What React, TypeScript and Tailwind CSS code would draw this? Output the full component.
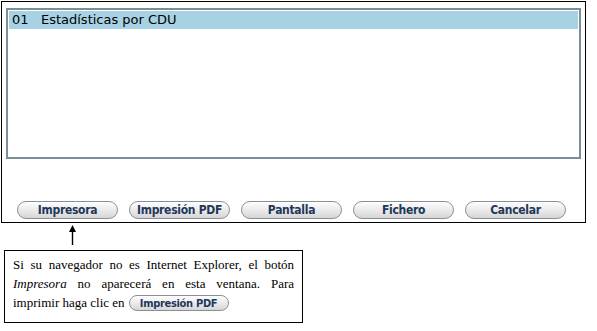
import React from "react";

const labels = ["Impresora", "Impresión PDF", "Pantalla", "Fichero", "Cancelar"];

function PillButton({ label, className = "" }: { label: string; className?: string }) {
  return (
    <button
      className={`inline-flex items-center justify-center rounded-full border border-[#8a8f96] bg-gradient-to-b from-[#fdfdfd] via-[#ebebeb] to-[#d6d6d6] font-bold leading-none text-[#23375a] tracking-[-0.3px] shadow-[inset_0_1px_0_#fff] ${className}`}
      style={{ fontFamily: "'DejaVu Sans Condensed', 'DejaVu Sans', sans-serif" }}
    >
      {label}
    </button>
  );
}

export default function App() {
  return (
    <div className="w-[597px] h-[331px] bg-white relative">
      <div className="ml-px mt-px w-[585px] h-[222px] border border-black flex flex-col">
        <div className="mx-[4px] mt-[6px] h-[151px] border-2 border-[#7a8e9a] p-px">
          <div
            className="h-[18px] bg-[#a6d2e4] text-[13px] leading-[18px] text-black pl-[3px]"
            style={{ fontFamily: "'DejaVu Sans', Verdana, sans-serif" }}
          >
            01&nbsp;&nbsp;&nbsp;Estadísticas por CDU
          </div>
        </div>
        <div className="flex gap-[11px] pl-[15px] mt-[42px]">
          {labels.map((l) => (
            <PillButton key={l} label={l} className="w-[101px] h-[18px] text-[12px]" />
          ))}
        </div>
      </div>
      <div className="ml-[69px] mt-[2px] w-[7px]">
        <svg width="7" height="20" viewBox="0 0 7 20" className="block">
          <polygon points="3.5,0 7,7 0,7" fill="#000" />
          <rect x="2.8" y="6" width="1.4" height="14" fill="#000" />
        </svg>
      </div>
      <div
        className="ml-[4px] mt-[5px] w-[299px] h-[73px] border border-black px-[8px] pt-[5px] text-[13px] leading-[18.5px] text-black text-justify"
        style={{ fontFamily: "'Liberation Serif', 'Times New Roman', serif" }}
      >
        <p className="[text-align-last:justify]">
          Si su navegador no es Internet Explorer, el botón <i>Impresora</i> no aparecerá en esta ventana. Para
        </p>
        <p className="mt-[1px] flex items-center gap-[4px]">
          <span>imprimir haga clic en</span>
          <PillButton label="Impresión PDF" className="w-[100px] h-[16px] text-[11px]" />
        </p>
      </div>
    </div>
  );
}
